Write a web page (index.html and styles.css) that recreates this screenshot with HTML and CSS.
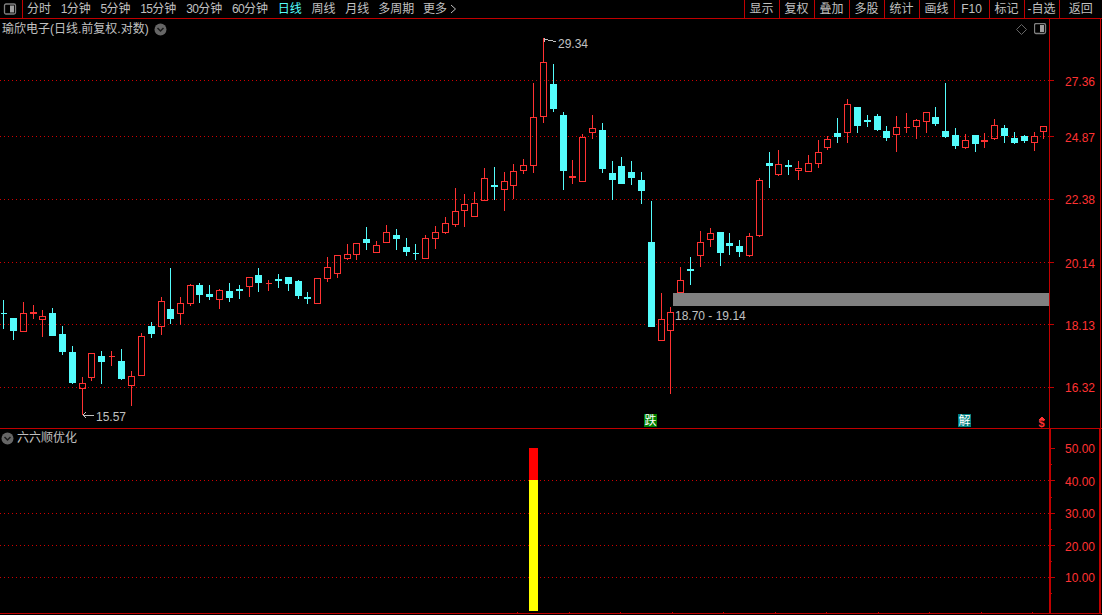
FILE: index.html
```html
<!DOCTYPE html>
<html lang="zh">
<head>
<meta charset="utf-8">
<title>瑜欣电子 日线</title>
<link rel="stylesheet" href="styles.css">
</head>
<body>
<header class="toolbar">
  <div class="panel-toggle">
    <svg class="toggle-icon" width="14" height="12" viewBox="0 0 14 12"><rect class="toggle-frame" x="1.500" y="1" width="11" height="10" rx="1.500"/><rect class="toggle-fill" x="7" y="2.500" width="4" height="7"/></svg>
  </div>
  <nav class="periods">
    <span class="period">分时</span>
    <span class="period"><span class="num">1</span>分钟</span>
    <span class="period"><span class="num">5</span>分钟</span>
    <span class="period"><span class="num">15</span>分钟</span>
    <span class="period"><span class="num">30</span>分钟</span>
    <span class="period"><span class="num">60</span>分钟</span>
    <span class="period is-active">日线</span>
    <span class="period">周线</span>
    <span class="period">月线</span>
    <span class="period period-tight">多周期</span>
    <span class="period period-tight">更多<svg class="more-arrow" width="7" height="10" viewBox="0 0 7 10"><path d="M1 1l4.500 4-4.500 4"/></svg></span>
  </nav>
  <nav class="actions">
    <span class="action">显示</span>
    <span class="action">复权</span>
    <span class="action">叠加</span>
    <span class="action">多股</span>
    <span class="action">统计</span>
    <span class="action">画线</span>
    <span class="action">F10</span>
    <span class="action">标记</span>
    <span class="action">-自选</span>
    <span class="action">返回</span>
  </nav>
</header>

<section class="pane pane-price">
  <div class="plot">
    <svg class="canvas" width="1049" height="409" viewBox="0 19 1049 409">
      <path class="grid" d="M0 80.500H1049M0 136.500H1049M0 199.500H1049M0 262.500H1049M0 324.500H1049M0 387.500H1049"/>
      <rect class="zone" x="673" y="293" width="376" height="13"/>
      <g class="red">
        <path d="M23.500 302V313M20.500 313.500h6v18h-6z"/>
        <path d="M33.500 305V319M30.500 312.500h6v1h-6z"/>
        <path d="M42.500 310V316M39.500 316.500h6v3h-6zM42.500 320V337"/>
        <path d="M82.500 377V383M79.500 383.500h6v5h-6zM82.500 389V415"/>
        <path d="M88.500 353.500h6v24h-6zM91.500 378V381"/>
        <path d="M111.500 351V366M108.500 356.500h6"/>
        <path d="M131.500 371V376M128.500 376.500h6v9h-6zM131.500 386V406"/>
        <path d="M141.500 333V336M138.500 336.500h6v39h-6z"/>
        <path d="M161.500 297V301M158.500 301.500h6v25h-6zM161.500 327V335"/>
        <path d="M180.500 297V303M177.500 303.500h6v10h-6zM180.500 314V325"/>
        <path d="M190.500 284V285M187.500 285.500h6v18h-6zM190.500 304V306"/>
        <path d="M219.500 289V290M216.500 290.500h6v9h-6zM219.500 300V309"/>
        <path d="M246.500 277.500h6v9h-6zM249.500 287V297"/>
        <path d="M268.500 280V291M265.500 283.500h6"/>
        <path d="M314.500 278.500h6v25h-6z"/>
        <path d="M327.500 257V267M324.500 267.500h6v11h-6zM327.500 279V282"/>
        <path d="M334.500 255.500h6v18h-6zM337.500 274V278"/>
        <path d="M347.500 244V254M344.500 254.500h6v4h-6zM347.500 259V260"/>
        <path d="M353.500 243.500h6v11h-6zM356.500 255V260"/>
        <path d="M376.500 241V245M373.500 245.500h6v7h-6z"/>
        <path d="M386.500 225V232M383.500 232.500h6v10h-6z"/>
        <path d="M425.500 235V238M422.500 238.500h6v20h-6z"/>
        <path d="M435.500 226V232M432.500 232.500h6v6h-6zM435.500 239V249"/>
        <path d="M445.500 217V223M442.500 223.500h6v9h-6zM445.500 233V234"/>
        <path d="M455.500 188V211M452.500 211.500h6v13h-6zM455.500 225V227"/>
        <path d="M464.500 194V204M461.500 204.500h6v6h-6zM464.500 211V227"/>
        <path d="M474.500 192V203M471.500 203.500h6v13h-6z"/>
        <path d="M484.500 168V178M481.500 178.500h6v22h-6z"/>
        <path d="M504.500 172V181M501.500 181.500h6v8h-6zM504.500 190V211"/>
        <path d="M513.500 164V171M510.500 171.500h6v14h-6zM513.500 186V199"/>
        <path d="M523.500 159V165M520.500 165.500h6v5h-6zM523.500 171V174"/>
        <path d="M533.500 83V117M530.500 117.500h6v48h-6zM533.500 166V173"/>
        <path d="M543.500 38V62M540.500 62.500h6v54h-6zM543.500 117V123"/>
        <path d="M572.500 160V176M569.500 176.500h6v1h-6zM572.500 178V184"/>
        <path d="M582.500 134V137M579.500 137.500h6v44h-6z"/>
        <path d="M592.500 115V128M589.500 128.500h6v4h-6zM592.500 133V139"/>
        <path d="M661.500 293V319M658.500 319.500h6v21h-6z"/>
        <path d="M670.500 307V312M667.500 312.500h6v18h-6zM670.500 331V394"/>
        <path d="M680.500 267V280M677.500 280.500h6v12h-6z"/>
        <path d="M700.500 231V242M697.500 242.500h6v13h-6zM700.500 256V267"/>
        <path d="M710.500 228V233M707.500 233.500h6v6h-6zM710.500 240V247"/>
        <path d="M749.500 233V236M746.500 236.500h6v19h-6zM749.500 256V257"/>
        <path d="M759.500 178V180M756.500 180.500h6v55h-6zM759.500 236V237"/>
        <path d="M778.500 150V164M775.500 164.500h6v10h-6zM778.500 175V176"/>
        <path d="M798.500 161V168M795.500 168.500h6v2h-6zM798.500 171V180"/>
        <path d="M808.500 155V163M805.500 163.500h6v8h-6z"/>
        <path d="M818.500 140V152M815.500 152.500h6v11h-6zM818.500 164V168"/>
        <path d="M827.500 136V139M824.500 139.500h6v8h-6zM827.500 148V150"/>
        <path d="M847.500 99V104M844.500 104.500h6v28h-6zM847.500 133V143"/>
        <path d="M896.500 116V127M893.500 127.500h6v7h-6zM896.500 135V152"/>
        <path d="M906.500 113V133M903.500 127.500h6"/>
        <path d="M916.500 119V120M913.500 120.500h6v6h-6zM916.500 127V139"/>
        <path d="M923.500 112.500h6v9h-6zM926.500 122V133"/>
        <path d="M965.500 134V140M962.500 140.500h6v7h-6zM965.500 148V149"/>
        <path d="M984.500 133V140M981.500 140.500h6v1h-6zM984.500 142V148"/>
        <path d="M994.500 119V125M991.500 125.500h6v13h-6zM994.500 139V140"/>
        <path d="M1034.500 132V136M1031.500 136.500h6v6h-6zM1034.500 143V151"/>
        <path d="M1040.500 126.500h6v5h-6zM1043.500 132V139"/>
      </g>
      <g class="cyan">
        <path d="M3.500 300V329M0.500 313.500h6"/>
        <path d="M10.500 318.500h6v12h-6zM13.500 331V340"/>
        <path d="M52.500 308V313M49.500 313.500h6v22h-6z"/>
        <path d="M62.500 326V334M59.500 334.500h6v17h-6zM62.500 352V355"/>
        <path d="M72.500 346V352M69.500 352.500h6v30h-6zM72.500 383V384"/>
        <path d="M101.500 351V356M98.500 356.500h6v5h-6zM101.500 362V384"/>
        <path d="M121.500 349V361M118.500 361.500h6v17h-6zM121.500 379V380"/>
        <path d="M151.500 322V326M148.500 326.500h6v7h-6zM151.500 334V338"/>
        <path d="M170.500 268V309M167.500 309.500h6v9h-6zM170.500 319V324"/>
        <path d="M199.500 283V285M196.500 285.500h6v9h-6zM199.500 295V303"/>
        <path d="M209.500 285V294M206.500 294.500h6v2h-6zM209.500 297V300"/>
        <path d="M229.500 283V291M226.500 291.500h6v6h-6zM229.500 298V302"/>
        <path d="M239.500 285V299M236.500 289.500h6v1h-6z"/>
        <path d="M258.500 268V275M255.500 275.500h6v7h-6zM258.500 283V292"/>
        <path d="M278.500 274V288M275.500 279.500h6v1h-6z"/>
        <path d="M285.500 277.500h6v6h-6zM288.500 284V291"/>
        <path d="M298.500 280V281M295.500 281.500h6v14h-6zM298.500 296V299"/>
        <path d="M307.500 292V304M304.500 297.500h6v1h-6z"/>
        <path d="M366.500 227V239M363.500 239.500h6v3h-6zM366.500 243V250"/>
        <path d="M396.500 229V235M393.500 235.500h6v3h-6zM396.500 239V250"/>
        <path d="M406.500 238V247M403.500 247.500h6v4h-6zM406.500 252V256"/>
        <path d="M415.500 244V260M412.500 253.500h6"/>
        <path d="M494.500 167V200M491.500 185.500h6v1h-6z"/>
        <path d="M553.500 64V84M550.500 84.500h6v24h-6zM553.500 109V112"/>
        <path d="M563.500 112V115M560.500 115.500h6v55h-6zM563.500 171V190"/>
        <path d="M602.500 123V130M599.500 130.500h6v38h-6zM602.500 169V173"/>
        <path d="M612.500 161V173M609.500 173.500h6v6h-6zM612.500 180V200"/>
        <path d="M621.500 157V166M618.500 166.500h6v17h-6z"/>
        <path d="M631.500 161V172M628.500 172.500h6v5h-6zM631.500 178V185"/>
        <path d="M641.500 172V180M638.500 180.500h6v10h-6zM641.500 191V204"/>
        <path d="M651.500 201V242M648.500 242.500h6v84h-6z"/>
        <path d="M690.500 257V285M687.500 269.500h6v1h-6z"/>
        <path d="M717.500 232.500h6v20h-6zM720.500 253V266"/>
        <path d="M729.500 233V255M726.500 243.500h6v2h-6z"/>
        <path d="M739.500 240V246M736.500 246.500h6v5h-6zM739.500 252V257"/>
        <path d="M769.500 152V188M766.500 163.500h6v2h-6z"/>
        <path d="M788.500 160V175M785.500 165.500h6v1h-6z"/>
        <path d="M837.500 118V133M834.500 133.500h6v3h-6zM837.500 137V143"/>
        <path d="M854.500 107.500h6v18h-6zM857.500 126V133"/>
        <path d="M867.500 115V127M864.500 120.500h6v1h-6z"/>
        <path d="M877.500 114V116M874.500 116.500h6v13h-6zM877.500 130V131"/>
        <path d="M886.500 126V131M883.500 131.500h6v6h-6zM886.500 138V141"/>
        <path d="M935.500 107V117M932.500 117.500h6v6h-6zM935.500 124V126"/>
        <path d="M945.500 83V131M942.500 131.500h6v5h-6zM945.500 137V138"/>
        <path d="M955.500 128V135M952.500 135.500h6v10h-6zM955.500 146V149"/>
        <path d="M972.500 135.500h6v8h-6zM975.500 144V152"/>
        <path d="M1004.500 125V128M1001.500 128.500h6v7h-6zM1004.500 136V143"/>
        <path d="M1014.500 132V138M1011.500 138.500h6v4h-6zM1014.500 143V144"/>
        <path d="M1024.500 135V136M1021.500 136.500h6v4h-6zM1024.500 141V143"/>
      </g>
      <g class="callout">
        <path d="M544 38.500h1M544 38v4M545 39l3 1h3l2 1h3"/>
        <text x="558" y="48">29.34</text>
        <path d="M83 415.500h11M83 415h2M86 412l-3 3 3 3"/>
        <text x="96" y="421">15.57</text>
        <text x="675" y="320">18.70 - 19.14</text>
      </g>
      <g class="signals">
        <rect class="sig-fall" x="644" y="414" width="13" height="13"/>
        <text x="644.500" y="425">跌</text>
        <rect class="sig-relief" x="958" y="414" width="13" height="13"/>
        <text x="958.500" y="425">解</text>
        <path class="sig-dollar-top" d="M1039 419.500l3-3 3 3z"/>
        <text class="sig-dollar" x="1038.500" y="427">$</text>
      </g>
    </svg>
    <div class="pane-title">
      <span>瑜欣电子(日线.前复权.对数)</span>
      <svg class="chevron-badge" width="13" height="13" viewBox="0 0 13 13"><circle cx="6.500" cy="6.500" r="6"/><path d="M3.500 5l3 3 3-3"/></svg>
    </div>
    <div class="pane-tools">
      <svg width="11" height="11" viewBox="0 0 11 11"><path class="tool-diamond" d="M5.500.5l5 5-5 5-5-5z"/></svg>
      <svg width="13" height="12" viewBox="0 0 13 12"><rect class="toggle-frame" x=".5" y=".5" width="11" height="10" rx="1.500"/><rect class="toggle-fill" x="6" y="2" width="4" height="7"/></svg>
    </div>
  </div>
  <div class="axis">
    <svg class="canvas" width="50" height="409" viewBox="1050 19 50 409">
      <path class="tick" d="M1050 80.500h4M1050 136.500h4M1050 199.500h4M1050 262.500h4M1050 324.500h4M1050 387.500h4"/>
      <g class="axis-labels">
        <text x="1065" y="86">27.36</text>
        <text x="1065" y="142">24.87</text>
        <text x="1065" y="204">22.38</text>
        <text x="1065" y="268">20.14</text>
        <text x="1065" y="330">18.13</text>
        <text x="1065" y="392">16.32</text>
      </g>
    </svg>
  </div>
</section>

<section class="pane pane-indicator">
  <div class="plot">
    <svg class="canvas" width="1049" height="184" viewBox="0 429 1049 184">
      <path class="grid" d="M0 480.500H1049M0 513.500H1049M0 545.500H1049M0 577.500H1049"/>
      <path class="time-ticks" d="M517 612.500H1049"/>
      <rect class="bar-top" x="529" y="448" width="9" height="32"/>
      <rect class="bar-base" x="529" y="480" width="9" height="131"/>
    </svg>
    <div class="pane-title pane-title-lower">
      <svg class="chevron-badge" width="13" height="13" viewBox="0 0 13 13"><circle cx="6.500" cy="6.500" r="6"/><path d="M3.500 5l3 3 3-3"/></svg>
      <span>六六顺优化</span>
    </div>
  </div>
  <div class="axis axis-lower">
    <svg class="canvas" width="49" height="184" viewBox="1051 429 49 184">
      <path class="tick" d="M1051 448.500h4M1051 480.500h4M1051 513.500h4M1051 545.500h4M1051 577.500h4M1051 464.500h1M1051 497.500h1M1051 529.500h1M1051 561.500h1M1051 593.500h1"/>
      <g class="axis-labels">
        <text x="1065" y="453">50.00</text>
        <text x="1065" y="486">40.00</text>
        <text x="1065" y="518">30.00</text>
        <text x="1065" y="551">20.00</text>
        <text x="1065" y="582">10.00</text>
      </g>
    </svg>
  </div>
</section>
</body>
</html>
```

FILE: styles.css
```css
* { box-sizing: border-box; }

html, body {
  margin: 0;
  height: 100%;
  overflow: hidden;
  background: #000;
}

body {
  color: #c0c0c0;
  font: 12px/14px "Liberation Sans", "Noto Sans CJK SC", sans-serif;
}

.toolbar {
  display: flex;
  align-items: stretch;
  height: 19px;
  border-bottom: 1px solid #c00000;
}

.panel-toggle {
  display: flex;
  align-items: center;
  justify-content: center;
  width: 23px;
  padding-right: 3px;
  border-right: 1px solid #c00000;
}

.toggle-frame { fill: none; stroke: #808080; stroke-width: 1.300; }
.toggle-fill { fill: #a0a0a0; }

.periods {
  display: flex;
  flex: 1;
  align-items: center;
  margin-left: -1px;
}

.period {
  display: flex;
  align-items: center;
  padding: 0 4.900px;
  white-space: nowrap;
}

.num { letter-spacing: -0.670px; }

.period-tight { margin-left: -1px; }

.period.is-active { color: #54fcfc; }

.more-arrow { margin-left: 3px; }
.more-arrow path { fill: none; stroke: #c0c0c0; }

.actions { display: flex; }

.action {
  display: flex;
  align-items: center;
  justify-content: center;
  width: 35px;
  border-left: 1px solid #c00000;
}

.action:last-child { width: 43.500px; }

.pane {
  display: flex;
  border-bottom: 1px solid #c00000;
}

.pane-price { height: 410px; }
.pane-indicator { height: 185px; }

.plot {
  position: relative;
  width: 1049px;
  height: 100%;
}

.canvas { display: block; shape-rendering: crispEdges; }
.canvas text { shape-rendering: auto; }

.grid {
  fill: none;
  stroke: #d00000;
  stroke-dasharray: 1 3;
}

.time-ticks {
  fill: none;
  stroke: #c00000;
  stroke-dasharray: 1 50.500;
}

.zone { fill: #808080; }

.red path { fill: none; stroke: #ff3232; }
.cyan path { fill: #54fcfc; stroke: #54fcfc; }

.callout text { fill: #c0c0c0; font-size: 12px; }
.callout path { fill: none; stroke: #c0c0c0; }

.signals text { fill: #fff; font-size: 12px; }
.sig-fall { fill: #008000; }
.sig-relief { fill: #008080; }
.sig-dollar-top { fill: #ff3232; }
.signals .sig-dollar { fill: #ff3232; font-weight: 700; font-size: 11px; }

.pane-title {
  position: absolute;
  top: 3px;
  left: 2px;
  display: flex;
  align-items: center;
  gap: 5px;
  white-space: nowrap;
}

.pane-title-lower { left: 1px; top: 2px; gap: 3px; }

.chevron-badge circle { fill: #666; }
.chevron-badge path { fill: none; stroke: #1a1a1a; stroke-width: 1.500; }

.pane-tools {
  position: absolute;
  top: 4px;
  right: 2px;
  display: flex;
  align-items: center;
  gap: 7px;
}

.tool-diamond { fill: none; stroke: #666; }

.axis {
  width: 52px;
  height: 100%;
  border-left: 1px solid #c00000;
  border-right: 1px solid #c00000;
}

.axis-lower {
  border-left-width: 2px;
  border-right-width: 2px;
}

.tick { fill: none; stroke: #c00000; }

.axis-labels text { fill: #ff3232; font-size: 12px; }

.bar-top { fill: #ff0000; }
.bar-base { fill: #ffff00; }
```
